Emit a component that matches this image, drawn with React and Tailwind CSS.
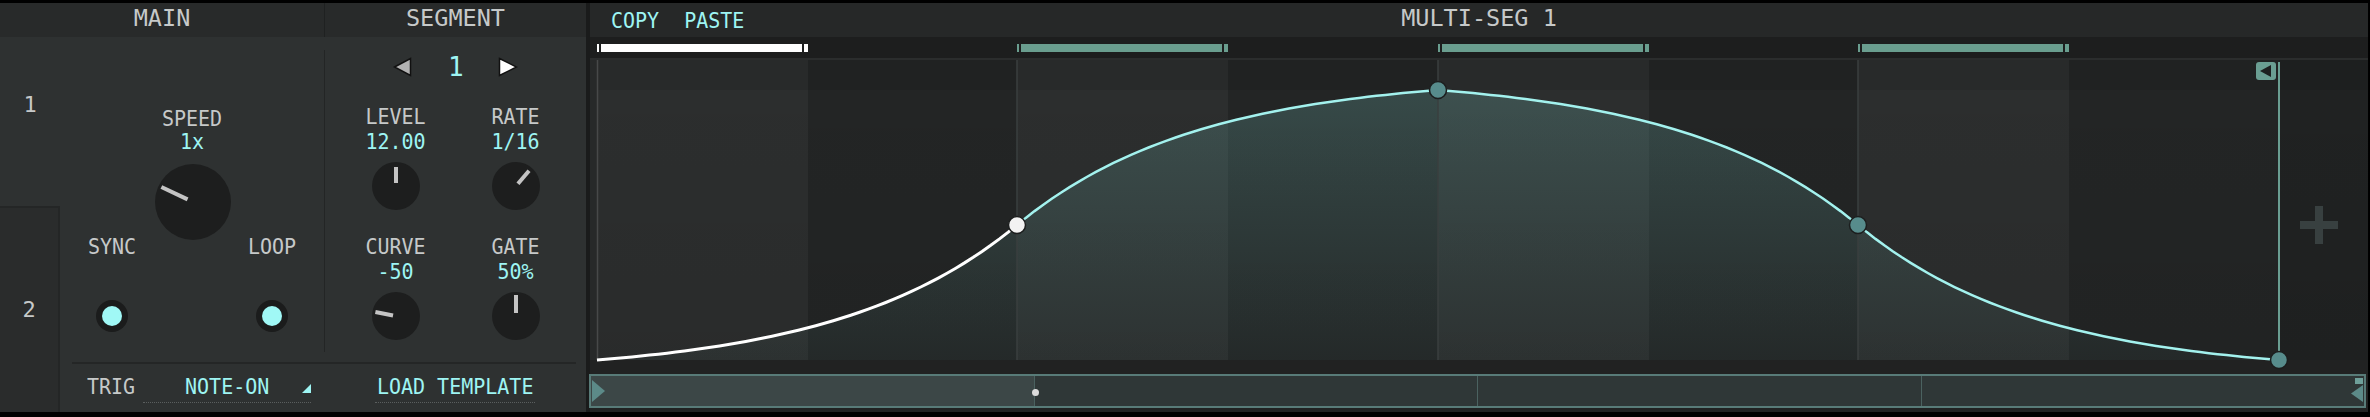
import React from "react";

const CYAN = "text-[#9ef5f3]";
const GRAY = "text-[#c6c9c9]";

function Knob({ size, angle, r0, r1 }) {
  const c = size / 2;
  const a = (angle * Math.PI) / 180;
  const dx = Math.sin(a);
  const dy = -Math.cos(a);
  return (
    <svg width={size} height={size} viewBox={`0 0 ${size} ${size}`} className="block">
      <circle cx={c} cy={c} r={c} fill="#1d1e1e" />
      <line
        x1={c + dx * r0}
        y1={c + dy * r0}
        x2={c + dx * r1}
        y2={c + dy * r1}
        stroke="#c4c4c4"
        strokeWidth="4"
      />
    </svg>
  );
}

function Toggle() {
  return (
    <div className="w-[32px] h-[32px] rounded-full bg-[#1b1c1c] flex items-center justify-center">
      <div className="w-[20px] h-[20px] rounded-full bg-[#a0f8f6]" />
    </div>
  );
}

function Param({ label, value, angle, r1 }) {
  return (
    <div className="w-[80px] flex flex-col items-center">
      <div className={`text-[20px] leading-none scale-y-110 ${GRAY}`}>{label}</div>
      <div className={`mt-[5px] text-[20px] leading-none scale-y-110 ${CYAN}`}>{value}</div>
      <div className="mt-[11px]">
        <Knob size={48} angle={angle} r0={3} r1={r1} />
      </div>
    </div>
  );
}

const P = [597, 1017, 1438, 1858, 2279];
const Y = [360, 225, 90, 225, 360];
const TYPES = ["in", "out", "in", "out"];
const K = 2.34;
const fin = (t) => (Math.exp(K * t) - 1) / (Math.exp(K) - 1);

function segPts(i) {
  const pts = [];
  const N = 48;
  for (let j = 0; j <= N; j++) {
    const t = j / N;
    const f = TYPES[i] === "in" ? fin(t) : 1 - fin(1 - t);
    pts.push([P[i] + (P[i + 1] - P[i]) * t, Y[i] + (Y[i + 1] - Y[i]) * f]);
  }
  return pts;
}

const allSegs = [0, 1, 2, 3].map(segPts);
const toPath = (pts) => pts.map((p, i) => `${i ? "L" : "M"}${p[0].toFixed(2)} ${p[1].toFixed(2)}`).join(" ");
const whitePath = toPath(allSegs[0]);
const cyanPath = toPath([].concat(allSegs[1], allSegs[2].slice(1), allSegs[3].slice(1)));
const fillPath =
  toPath([].concat(allSegs[0], allSegs[1].slice(1), allSegs[2].slice(1), allSegs[3].slice(1))) +
  ` L${P[4]} 360 L${P[0]} 360 Z`;

function Graph() {
  const light = [
    [597, 808],
    [1017, 1228],
    [1438, 1649],
    [1858, 2069],
  ];
  return (
    <svg width="1778" height="300" viewBox="590 60 1778 300" className="block overflow-visible">
      <defs>
        <linearGradient id="fillGrad" gradientUnits="userSpaceOnUse" x1="0" y1="90" x2="0" y2="360">
          <stop offset="0" stopColor="rgb(100,160,155)" stopOpacity="0.3" />
          <stop offset="1" stopColor="rgb(100,160,155)" stopOpacity="0.05" />
        </linearGradient>
        <linearGradient id="shade" gradientUnits="userSpaceOnUse" x1="0" y1="60" x2="0" y2="360">
          <stop offset="0" stopColor="#000" stopOpacity="0" />
          <stop offset="1" stopColor="#000" stopOpacity="0.06" />
        </linearGradient>
      </defs>
      <rect x="590" y="60" width="1778" height="300" fill="#232525" />
      <rect x="590" y="60" width="7" height="300" fill="#272929" />
      {light.map(([a, b]) => (
        <rect key={a} x={a} y="60" width={b - a} height="300" fill="#2c2e2e" />
      ))}
      <rect x="2279" y="60" width="89" height="300" fill="#202222" />
      <rect x="597" y="60" width="1771" height="300" fill="url(#shade)" />
      <rect x="597" y="60" width="1771" height="30" fill="#000" fillOpacity="0.07" />
      <path d={fillPath} fill="url(#fillGrad)" />
      {[1017, 1438, 1858].map((x) => (
        <line key={x} x1={x} y1="60" x2={x} y2="360" stroke="#3a3f3f" strokeWidth="1.5" />
      ))}
      <line x1="597.5" y1="60" x2="597.5" y2="360" stroke="#474949" strokeWidth="1.5" />
      <line x1="2279" y1="62" x2="2279" y2="360" stroke="#6a9e92" strokeWidth="2" />
      <rect x="2256" y="62" width="20" height="18" rx="3" fill="#6a9e92" />
      <polygon points="2260,71 2271,65 2271,77" fill="#1d1f1f" />
      <rect x="2300" y="221" width="38" height="8" fill="#384040" />
      <rect x="2315" y="206" width="8" height="38" fill="#384040" />
      <path d={cyanPath} fill="none" stroke="#a3f2ee" strokeWidth="2.5" />
      <path d={whitePath} fill="none" stroke="#ffffff" strokeWidth="3" />
      <circle cx="1017" cy="225" r="8.5" fill="#f2f2f2" stroke="#1c1e1e" strokeWidth="1.5" />
      <circle cx="1438" cy="90" r="8.5" fill="#578c8c" stroke="#1c1e1e" strokeWidth="1.5" />
      <circle cx="1858" cy="225" r="8.5" fill="#578c8c" stroke="#1c1e1e" strokeWidth="1.5" />
      <circle cx="2279" cy="360" r="8.5" fill="#578c8c" stroke="#1c1e1e" strokeWidth="1.5" />
    </svg>
  );
}

function SegBar({ width, white }) {
  const c = white ? "bg-white" : "bg-[#6a9e8f]";
  return (
    <div className="h-full flex items-center" style={{ width }}>
      <div className={`w-[2px] h-[8px] ${c}`} />
      <div className={`ml-[2px] w-[201px] h-[8px] ${c}`} />
      <div className={`ml-[2px] w-[4px] h-[8px] ${c}`} />
    </div>
  );
}

export default function App() {
  return (
    <div className="w-[2370px] h-[417px] bg-black flex pt-[3px] pb-[5px] pr-[2px] font-['DejaVu_Sans_Mono',monospace] overflow-hidden">
      {/* LEFT PANEL */}
      <div className="w-[586px] h-full flex flex-col bg-[#2e3131]">
        <div className="h-[34px] flex bg-[#282a2a] text-[23.5px] leading-none">
          <div className={`w-[324px] flex items-center justify-center pb-[2px] ${GRAY}`}>MAIN</div>
          <div className="w-px bg-[#1f2121]" />
          <div className={`flex-1 flex items-center justify-center pb-[2px] ${GRAY}`}>SEGMENT</div>
        </div>
        <div className="flex-1 flex">
          <div className="w-[60px] flex flex-col">
            <div className={`h-[169px] flex justify-center pt-[57px] text-[22px] leading-none ${GRAY}`}>1</div>
            <div className={`flex-1 flex items-center justify-center bg-[#2a2c2c] border-t-2 border-r-2 border-[#242626] text-[22px] leading-none ${GRAY}`}>
              2
            </div>
          </div>
          <div className="flex-1 flex flex-col">
            <div className="h-[325px] flex">
              {/* MAIN column */}
              <div className="w-[264px] flex flex-col items-center pt-[71px]">
                <div className={`text-[20px] leading-none scale-y-110 ${GRAY}`}>SPEED</div>
                <div className={`mt-[3px] text-[20px] leading-none scale-y-110 ${CYAN}`}>1x</div>
                <div className="mt-[13px] ml-[2px]">
                  <Knob size={76} angle={-64.6} r0={6} r1={35} />
                </div>
                <div className="mt-[-4px] flex gap-[100px]">
                  <div className="w-[60px] flex flex-col items-center">
                    <div className={`text-[20px] leading-none scale-y-110 ${GRAY}`}>SYNC</div>
                    <div className="mt-[44px]">
                      <Toggle />
                    </div>
                  </div>
                  <div className="w-[60px] flex flex-col items-center">
                    <div className={`text-[20px] leading-none scale-y-110 ${GRAY}`}>LOOP</div>
                    <div className="mt-[44px]">
                      <Toggle />
                    </div>
                  </div>
                </div>
              </div>
              <div className="w-px bg-[#232525] mt-[13px] mb-[10px]" />
              {/* SEGMENT column */}
              <div className="flex-1 flex flex-col pt-[20px]">
                <div className="h-[20px] flex justify-center items-center gap-[36px]">
                  <svg width="19" height="20" viewBox="0 0 19 20" className="block">
                    <polygon points="1.5,10 17.5,1.5 17.5,18.5" fill="#b2b2b2" stroke="#111" strokeWidth="1.5" />
                  </svg>
                  <div className={`w-[14px] text-center text-[26px] leading-none ${CYAN}`}>1</div>
                  <svg width="20" height="20" viewBox="0 0 20 20" className="block">
                    <polygon points="1.5,1.5 18.5,10 1.5,18.5" fill="#ffffff" stroke="#111" strokeWidth="1.5" />
                  </svg>
                </div>
                <div className="mt-[29px] flex justify-center gap-[40px]">
                  <Param label="LEVEL" value="12.00" angle={0} r1={19} />
                  <Param label="RATE" value="1/16" angle={40.6} r1={20} />
                </div>
                <div className="mt-[26px] flex justify-center gap-[40px]">
                  <Param label="CURVE" value="-50" angle={-79} r1={21} />
                  <Param label="GATE" value="50%" angle={0} r1={21} />
                </div>
              </div>
            </div>
            <div className="h-[2px] bg-[#242626] ml-[12px] mr-[10px]" />
            <div className="flex-1 flex items-start text-[20px] leading-none">
              <div className={`ml-[27px] mt-[12px] scale-y-110 ${GRAY}`}>TRIG</div>
              <div className="ml-[8px] w-[168px] relative flex justify-center pt-[12px] pb-[6px] border-b border-dotted border-[#5a5e5e]">
                <span className={`inline-block scale-y-110 ${CYAN}`}>NOTE-ON</span>
                <svg width="9" height="9" viewBox="0 0 9 9" className="absolute right-0 top-[20px]">
                  <polygon points="9,0 9,9 0,9" fill="#9ef5f3" />
                </svg>
              </div>
              <div className="ml-[64px] w-[160px] flex justify-center pt-[12px] pb-[6px] border-b border-dotted border-[#5a5e5e]">
                <span className={`inline-block scale-y-110 ${CYAN}`}>LOAD TEMPLATE</span>
              </div>
            </div>
          </div>
        </div>
      </div>

      <div className="w-[4px] h-full bg-[#1a1b1b]" />

      {/* RIGHT PANEL */}
      <div className="flex-1 h-full flex flex-col bg-[#212222]">
        <div className="h-[34px] grid grid-cols-[1fr_auto_1fr] items-center bg-[#262828]">
          <div className={`flex gap-[25px] pl-[21px] text-[20px] leading-none ${CYAN}`}>
            <span className="inline-block scale-y-110">COPY</span>
            <span className="inline-block scale-y-110">PASTE</span>
          </div>
          <div className={`text-[23.5px] leading-none pb-[2px] ${GRAY}`}>MULTI-SEG 1</div>
          <div />
        </div>
        <div className="h-[21px] flex pl-[7px] bg-[#1d1e1e]">
          <SegBar width={420} white />
          <SegBar width={421} />
          <SegBar width={420} />
          <SegBar width={421} />
        </div>
        <div className="h-[2px] bg-[#2b2d2d]" />
        <div className="h-[300px]">
          <Graph />
        </div>
        <div className="h-[14px]" />
        <div className="h-[34px] ml-[-1px] mr-[2px] relative flex border-2 border-[#587b78] bg-[#2f3737]">
          <div className="flex-1 flex items-center bg-[#3c4747]">
            <svg width="13" height="22" viewBox="0 0 13 22" className="ml-[1px] block">
              <polygon points="0,0 13,11 0,22" fill="#5c8a88" />
            </svg>
          </div>
          <div className="w-px bg-[#4b6260]" />
          <div className="flex-1" />
          <div className="w-px bg-[#4b6260]" />
          <div className="flex-1" />
          <div className="w-px bg-[#4b6260]" />
          <div className="flex-1 relative">
            <div className="absolute right-[1px] top-[2px] w-[8px] h-[6px] bg-[#6e9f99]" />
            <svg width="12" height="17" viewBox="0 0 12 17" className="absolute right-[1px] top-[9px] block">
              <polygon points="0,8.5 12,0 12,17" fill="#5c8a88" />
            </svg>
          </div>
          <div className="absolute left-[441px] top-[13px] w-[7px] h-[7px] rounded-full bg-[#dcdcdc]" />
        </div>
        <div className="flex-1" />
      </div>
    </div>
  );
}
